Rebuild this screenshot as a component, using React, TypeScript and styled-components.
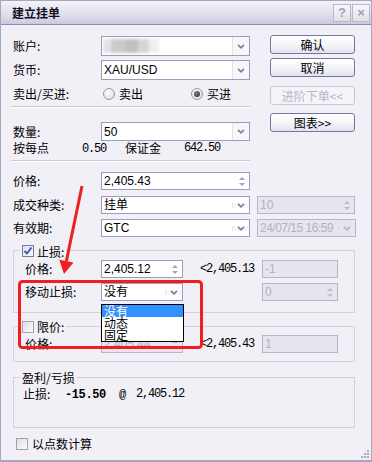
import React from "react";
import styled, { createGlobalStyle } from "styled-components";

const GlobalStyle = createGlobalStyle`
  html, body { margin: 0; padding: 0; background: #ffffff; }
  body {
    font-family: "Noto Sans CJK SC", "Liberation Sans", sans-serif;
    font-size: 12px;
    line-height: 14px;
    color: #000;
  }
  * { box-sizing: border-box; }
`;

const Window = styled.div`
  position: relative;
  width: 372px;
  height: 462px;
  background: #f1f0f7;
  border: 1px solid #a6a6be;
  border-bottom: 2px solid #a6a6be;
  overflow: hidden;
`;

const TitleBar = styled.div`
  height: 24px;
  display: flex;
  align-items: center;
  justify-content: space-between;
  padding: 0 1px 0 11px;
  background: linear-gradient(#f3f3f8, #dcdce9 65%, #cacadc);
  border-bottom: 1px solid #8c8cac;
`;

const Title = styled.span`
  font-weight: 700;
  font-size: 12px;
  color: #101020;
`;

const TitleButtons = styled.div`
  display: flex;
  gap: 1px;
`;

const TitleBtn = styled.span`
  width: 18px;
  height: 18px;
  border: 1px solid #b8b8cc;
  background: linear-gradient(#f8f8fb, #e0e0ea);
  display: flex;
  align-items: center;
  justify-content: center;
  color: #a0a0b8;
  font-weight: 700;
  font-size: 13px;
  font-family: "Liberation Sans", sans-serif;
`;

const Body = styled.div`
  padding: 10px 0 0 10px;
`;

const TopSection = styled.div`
  display: flex;
  align-items: flex-start;
`;

const LeftCol = styled.div`
  width: 239px;
  display: flex;
  flex-direction: column;
`;

const RightCol = styled.div`
  width: 85px;
  margin-left: 20px;
  display: flex;
  flex-direction: column;
`;

const Button = styled.button<{ $mt?: number }>`
  height: 19px;
  width: 85px;
  margin-top: ${(p) => p.$mt ?? 0}px;
  padding: 0;
  border: 1px solid #7676a0;
  border-radius: 3px;
  background: linear-gradient(#ffffff, #f5f5fa 50%, #e2e2ee);
  font-family: "Noto Sans CJK SC", "Liberation Sans", sans-serif;
  font-size: 12px;
  line-height: 14px;
  color: #000;
  display: flex;
  align-items: center;
  justify-content: center;

  &:disabled {
    border-color: #c6c6d6;
    color: #b6b6c8;
    background: #f5f5f9;
  }
`;

const FormRow = styled.div<{ $mt?: number; $h?: number }>`
  display: flex;
  align-items: center;
  height: ${(p) => p.$h ?? 18}px;
  margin-top: ${(p) => p.$mt ?? 0}px;
`;

const Label = styled.span<{ $w?: number }>`
  width: ${(p) => p.$w ?? 90}px;
  padding-left: 2px;
  flex-shrink: 0;
  white-space: nowrap;
`;

const Separator = styled.div<{ $mt?: number }>`
  margin-top: ${(p) => p.$mt ?? 0}px;
  border-top: 1px solid #cdcdda;
  border-bottom: 1px solid #ffffff;
`;

const Field = styled.div<{ $w?: number; $disabled?: boolean }>`
  position: relative;
  width: ${(p) => p.$w ?? 149}px;
  height: 100%;
  display: flex;
  align-items: stretch;
  flex-shrink: 0;
  border: 1px solid ${(p) => (p.$disabled ? "#b6b6c4" : "#9c9cbe")};
  background: ${(p) => (p.$disabled ? "#e5e6ef" : "#ffffff")};
  color: ${(p) => (p.$disabled ? "#b2b2c0" : "#000000")};
`;

const FieldText = styled.span<{ $tight?: boolean }>`
  flex: 1;
  display: flex;
  align-items: center;
  padding-left: 2px;
  font-family: "Liberation Sans", "Noto Sans CJK SC", sans-serif;
  font-size: 12px;
  letter-spacing: ${(p) => (p.$tight ? "-0.5px" : "0")};
  white-space: nowrap;
  overflow: hidden;
`;

const ComboArrow = styled.span<{ $disabled?: boolean }>`
  width: 17px;
  flex-shrink: 0;
  display: flex;
  align-items: center;
  justify-content: center;
  border-left: 1px solid ${(p) => (p.$disabled ? "#d4d4de" : "#e2e2ea")};
  background: ${(p) => (p.$disabled ? "transparent" : "#f7f7fa")};
`;

const SpinBox = styled.span`
  width: 15px;
  flex-shrink: 0;
  display: flex;
  flex-direction: column;
  align-items: center;
  justify-content: center;
  gap: 3px;
`;

const Blurred = styled.span`
  width: 56px;
  height: 14px;
  margin-left: -1px;
  background: linear-gradient(
    90deg,
    #e4e4e4 0 14%,
    #cbcbcb 14% 40%,
    #c1c1c1 40% 62%,
    #d6d6d6 62% 82%,
    #f0f0f0 82%
  );
  filter: blur(1.5px);
`;

const RadioGroup = styled.div`
  display: grid;
  grid-template-columns: 88px auto;
  align-items: center;
`;

const RadioOption = styled.span`
  display: flex;
  align-items: center;
  gap: 4px;
  padding-left: 2px;
`;

const RadioDot = styled.span<{ $on?: boolean }>`
  width: 12px;
  height: 12px;
  border-radius: 50%;
  border: 1px solid #9a9aaa;
  background: radial-gradient(circle at 40% 35%, #ffffff, #d4d4de);
  display: inline-flex;
  align-items: center;
  justify-content: center;

  &::after {
    content: "";
    width: 6px;
    height: 6px;
    border-radius: 50%;
    background: ${(p) =>
      p.$on ? "radial-gradient(circle at 40% 35%, #808088, #24242c)" : "transparent"};
  }
`;

const CheckBox = styled.span<{ $on?: boolean }>`
  width: 12px;
  height: 12px;
  flex-shrink: 0;
  border: 1px solid ${(p) => (p.$on ? "#7c7c9a" : "#a2a2b2")};
  background: linear-gradient(135deg, #dedee6, #fafafc);
  display: inline-flex;
  align-items: center;
  justify-content: center;
`;

const Stats = styled.div`
  display: flex;
  align-items: center;
  height: 14px;
  padding-left: 2px;
`;

const StatCell = styled.span<{ $w: number }>`
  width: ${(p) => p.$w}px;
  white-space: nowrap;
`;

const Mono = styled.span<{ $bold?: boolean }>`
  font-family: "Liberation Mono", "DejaVu Sans Mono", monospace;
  font-size: 12px;
  letter-spacing: ${(p) => (p.$bold ? "-0.4px" : "-1.2px")};
  font-weight: ${(p) => (p.$bold ? 700 : 400)};
  white-space: nowrap;
`;

const FullRow = styled.div<{ $mt: number }>`
  display: grid;
  grid-template-columns: 90px 149px 7px 99px;
  align-items: center;
  height: 18px;
  margin-top: ${(p) => p.$mt}px;

  & > * {
    height: 18px;
    display: flex;
    align-items: center;
  }
`;

const Group = styled.fieldset<{ $mt: number; $pt: number; $pb: number }>`
  margin: ${(p) => p.$mt}px 0 0 2px;
  width: 342px;
  min-width: 0;
  padding: ${(p) => p.$pt}px 0 ${(p) => p.$pb}px 0;
  border: 1px solid #d2d2dc;
`;

const Legend = styled.legend`
  margin-left: 6px;
  padding: 0 2px;
  height: 13px;
  line-height: 13px;
`;

const LegendInner = styled.span`
  display: inline-flex;
  align-items: center;
  gap: 3px;
  height: 13px;
`;

const GroupBody = styled.div`
  padding-left: 11px;
`;

const GroupRow = styled.div<{ $mt?: number }>`
  display: grid;
  grid-template-columns: 76px 82px 79px 76px;
  height: 18px;
  margin-top: ${(p) => p.$mt ?? 0}px;

  & > * {
    height: 18px;
    display: flex;
    align-items: center;
  }
`;

const Hint = styled.span`
  padding-left: 17px;
`;

const ListBox = styled.ul`
  position: absolute;
  top: calc(100% + 4px);
  left: -1px;
  width: 83px;
  margin: 0;
  padding: 0;
  list-style: none;
  background: #ffffff;
  border: 1px solid #000000;
  z-index: 2;
`;

const ListItem = styled.li<{ $active?: boolean }>`
  height: 12px;
  line-height: 12px;
  padding-left: 2px;
  font-size: 12px;
  background: ${(p) => (p.$active ? "#3390ff" : "transparent")};
  color: ${(p) => (p.$active ? "#ffffff" : "#000000")};
`;

const PnlRow = styled.div`
  display: flex;
  align-items: center;
  height: 14px;
  margin-left: -2px;
`;

const BottomRow = styled.div`
  display: flex;
  align-items: center;
  gap: 4px;
  height: 14px;
  margin: 9px 0 0 5px;
`;

const Overlay = styled.svg`
  position: absolute;
  top: -1px;
  left: -1px;
  pointer-events: none;
  z-index: 5;
`;

const Grip = styled.svg`
  position: absolute;
  right: 1px;
  bottom: 1px;
`;

const Chevron = ({ color = "#7c8098" }: { color?: string }) => (
  <svg width="8" height="5" viewBox="0 0 8 5">
    <path d="M1 0.8 L4 3.8 L7 0.8" fill="none" stroke={color} strokeWidth="1.7" />
  </svg>
);

const Spin = ({ color = "#a4a4b4" }: { color?: string }) => (
  <SpinBox>
    <svg width="6" height="3" viewBox="0 0 6 3">
      <path d="M0 3 L3 0 L6 3 Z" fill={color} />
    </svg>
    <svg width="6" height="3" viewBox="0 0 6 3">
      <path d="M0 0 L3 3 L6 0 Z" fill={color} />
    </svg>
  </SpinBox>
);

const Check = () => (
  <svg width="10" height="10" viewBox="0 0 10 10">
    <path d="M1.5 5 L4 7.5 L8.5 1.5" fill="none" stroke="#2a56c8" strokeWidth="1.8" />
  </svg>
);

const App = () => {
  return (
    <>
      <GlobalStyle />
      <Window>
        <TitleBar>
          <Title>建立挂单</Title>
          <TitleButtons>
            <TitleBtn>?</TitleBtn>
            <TitleBtn>×</TitleBtn>
          </TitleButtons>
        </TitleBar>
        <Body>
          <TopSection>
            <LeftCol>
              <FormRow $mt={1} $h={20}>
                <Label>账户:</Label>
                <Field>
                  <FieldText>
                    <Blurred />
                  </FieldText>
                  <ComboArrow>
                    <Chevron />
                  </ComboArrow>
                </Field>
              </FormRow>
              <FormRow $mt={4} $h={20}>
                <Label>货币:</Label>
                <Field>
                  <FieldText>XAU/USD</FieldText>
                  <ComboArrow>
                    <Chevron />
                  </ComboArrow>
                </Field>
              </FormRow>
              <FormRow $mt={4} $h={20}>
                <Label>卖出/买进:</Label>
                <RadioGroup>
                  <RadioOption>
                    <RadioDot />
                    卖出
                  </RadioOption>
                  <RadioOption>
                    <RadioDot $on />
                    买进
                  </RadioOption>
                </RadioGroup>
              </FormRow>
              <Separator $mt={2} />
              <FormRow $mt={14} $h={19}>
                <Label>数量:</Label>
                <Field>
                  <FieldText>50</FieldText>
                  <ComboArrow>
                    <Chevron />
                  </ComboArrow>
                </Field>
              </FormRow>
              <Stats>
                <StatCell $w={69}>按每点</StatCell>
                <StatCell $w={43}>
                  <Mono>0.50</Mono>
                </StatCell>
                <StatCell $w={59}>保证金</StatCell>
                <Mono>642.50</Mono>
              </Stats>
              <Separator $mt={5} />
            </LeftCol>
            <RightCol>
              <Button>确认</Button>
              <Button $mt={4}>取消</Button>
              <Button $mt={9} disabled>
                进阶下单&lt;&lt;
              </Button>
              <Button $mt={8}>图表&gt;&gt;</Button>
            </RightCol>
          </TopSection>

          <FullRow $mt={10}>
            <Label>价格:</Label>
            <Field>
              <FieldText>2,405.43</FieldText>
              <Spin />
            </Field>
          </FullRow>
          <FullRow $mt={6}>
            <Label>成交种类:</Label>
            <Field>
              <FieldText>挂单</FieldText>
              <ComboArrow>
                <Chevron />
              </ComboArrow>
            </Field>
            <span />
            <Field $w={98} $disabled>
              <FieldText>10</FieldText>
              <Spin color="#bcbcc8" />
            </Field>
          </FullRow>
          <FullRow $mt={5}>
            <Label>有效期:</Label>
            <Field>
              <FieldText>GTC</FieldText>
              <ComboArrow>
                <Chevron />
              </ComboArrow>
            </Field>
            <span />
            <Field $w={99} $disabled>
              <FieldText $tight>24/07/15 16:59</FieldText>
              <ComboArrow $disabled>
                <Chevron color="#b4b4c2" />
              </ComboArrow>
            </Field>
          </FullRow>

          <Group $mt={7} $pt={3} $pb={11}>
            <Legend>
              <LegendInner>
                <CheckBox $on>
                  <Check />
                </CheckBox>
                止损:
              </LegendInner>
            </Legend>
            <GroupBody>
              <GroupRow>
                <span>价格:</span>
                <Field $w={82}>
                  <FieldText>2,405.12</FieldText>
                  <Spin />
                </Field>
                <Hint>
                  <Mono>&lt;2,405.13</Mono>
                </Hint>
                <Field $w={76} $disabled>
                  <FieldText>-1</FieldText>
                </Field>
              </GroupRow>
              <GroupRow $mt={5}>
                <span>移动止损:</span>
                <Field $w={82}>
                  <FieldText>没有</FieldText>
                  <ComboArrow>
                    <Chevron />
                  </ComboArrow>
                  <ListBox>
                    <ListItem $active>没有</ListItem>
                    <ListItem>动态</ListItem>
                    <ListItem>固定</ListItem>
                  </ListBox>
                </Field>
                <span />
                <Field $w={76} $disabled>
                  <FieldText>0</FieldText>
                  <Spin color="#bcbcc8" />
                </Field>
              </GroupRow>
            </GroupBody>
          </Group>

          <Group $mt={7} $pt={2} $pb={8}>
            <Legend>
              <LegendInner>
                <CheckBox />
                限价:
              </LegendInner>
            </Legend>
            <GroupBody>
              <GroupRow>
                <span>价格:</span>
                <Field $w={82} $disabled>
                  <FieldText>2,405.44</FieldText>
                  <Spin color="#bcbcc8" />
                </Field>
                <Hint>
                  <Mono>&lt;2,405.43</Mono>
                </Hint>
                <Field $w={76} $disabled>
                  <FieldText>1</FieldText>
                </Field>
              </GroupRow>
            </GroupBody>
          </Group>

          <Group $mt={9} $pt={3} $pb={26}>
            <Legend>
              <LegendInner>盈利/亏损</LegendInner>
            </Legend>
            <GroupBody>
              <PnlRow>
                <StatCell $w={42}>止损:</StatCell>
                <StatCell $w={54}>
                  <Mono $bold>-15.50</Mono>
                </StatCell>
                <StatCell $w={17}>
                  <Mono>@</Mono>
                </StatCell>
                <Mono>2,405.12</Mono>
              </PnlRow>
            </GroupBody>
          </Group>

          <BottomRow>
            <CheckBox />
            以点数计算
          </BottomRow>
        </Body>

        <Grip width="9" height="9" viewBox="0 0 9 9">
          {[
            [6, 0],
            [3, 3],
            [6, 3],
            [0, 6],
            [3, 6],
            [6, 6],
          ].map(([x, y]) => (
            <rect key={`${x}-${y}`} x={x} y={y} width="2" height="2" fill="#a8a8c2" />
          ))}
        </Grip>

        <Overlay width="372" height="462" viewBox="0 0 372 462">
          <rect
            x="19.5"
            y="281.5"
            width="182"
            height="66"
            rx="3"
            fill="none"
            stroke="#f01e1e"
            strokeWidth="3"
          />
          <line x1="82" y1="186" x2="66.4" y2="261" stroke="#f01e1e" strokeWidth="3" />
          <polygon points="64,274 73.5,262.6 59.3,259.8" fill="#f01e1e" />
        </Overlay>
      </Window>
    </>
  );
};

export default App;
